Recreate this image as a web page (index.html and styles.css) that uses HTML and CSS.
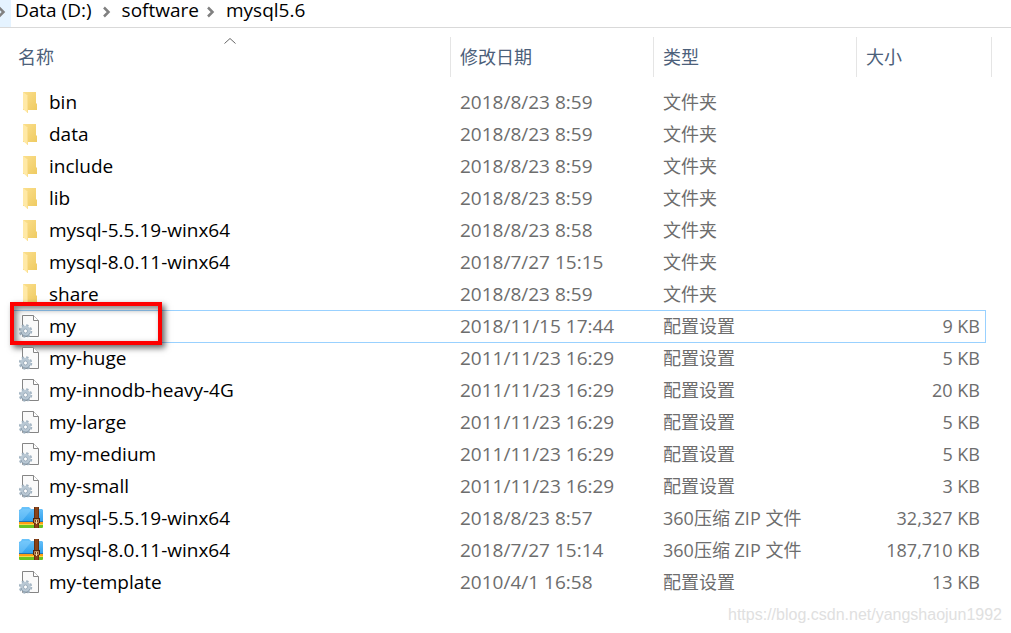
FILE: index.html
```
<!DOCTYPE html>
<html lang="zh-CN">

<head>
    <meta charset="UTF-8">
    <title>mysql5.6</title>
    <link rel="stylesheet" href="styles.css">
</head>

<body>
    <svg class="symbols" aria-hidden="true">
        <linearGradient id="folderBack" x1="0" y1="0" x2="1" y2="1">
            <stop offset="0" stop-color="#fbdf8d" />
            <stop offset="1" stop-color="#efcb62" />
        </linearGradient>
        <linearGradient id="zipBlue" x1="0" y1="0" x2="0" y2="1">
            <stop offset="0" stop-color="#6cc4fb" />
            <stop offset="1" stop-color="#2b9ceb" />
        </linearGradient>
        <symbol id="folder" viewBox="0 0 24 24">
            <path d="M4 2h13v11l1 1v6H4z" fill="url(#folderBack)" />
            <path d="M4 2l4 3 1 1v17l-1-.5L4 19z" fill="#ffe9a6" />
            <path d="M8 5l1 1v17l-1-.5z" fill="#fbdf90" />
        </symbol>
        <symbol id="ini" viewBox="0 0 24 24">
            <path d="M3.500 1.500h11l5 5v16h-16z" fill="#fafafa" stroke="#858585" />
            <path d="M14.500 1.500v5h5" fill="#fff" stroke="#858585" />
            <circle cx="6.500" cy="17" r="5.500" fill="none" stroke="#a3b4c2" stroke-width="2.500" stroke-dasharray="2.300 2.020" />
            <circle cx="6.500" cy="17" r="3.500" fill="#fff" stroke="#b9c8d4" stroke-width="3.500" />
            <path d="M2 18a5 5 0 0 0 6 4M11 19a5 5 0 0 1-3 3" fill="none" stroke="#8c9eae" />
            <circle cx="6.500" cy="17" r="2" fill="#fff" stroke="#8c9eae" stroke-width=".8" />
        </symbol>
        <symbol id="zip" viewBox="0 0 24 24">
            <path d="M0 4l2-1 1-2h7l2 2h11l1 1v13H0z" fill="url(#zipBlue)" />
            <path d="M4 3h9L3 15H0V5z" fill="#8fd5ff" opacity=".4" />
            <path d="M0 15h24v4H0z" fill="#ff9e12" />
            <path d="M0 15h24v1H0z" fill="#2272ae" />
            <path d="M0 18h24v1H0z" fill="#f7d84a" />
            <path d="M0 19h24v2q0 1-1 1H1q-1 0-1-1z" fill="#69c423" />
            <path d="M15 1h5v21h-5z" fill="#8a4319" />
            <path d="M15 1h1v21h-1zM19 1h1v21h-1z" fill="#66300f" />
            <path d="M14 12h7v5h-7z" fill="#4e2410" />
            <path d="M15.500 13.500h4v3h-4z" fill="#7a3c18" stroke="#d5a970" stroke-width=".8" />
            <path d="M17 14h1v4h-1z" fill="#f3dcae" />
        </symbol>
        <symbol id="chevron" viewBox="0 0 8 12">
            <path d="M1 1.500L5.500 6 1 10.500" fill="none" stroke="#808080" stroke-width="2.500" />
        </symbol>
    </svg>

    <nav class="address">
        <span class="address-start"><svg class="chevron"><use href="#chevron" /></svg></span>
        <a href="#">Data (D:)</a>
        <svg class="chevron"><use href="#chevron" /></svg>
        <a href="#">software</a>
        <svg class="chevron"><use href="#chevron" /></svg>
        <a href="#">mysql5.6</a>
    </nav>

    <main class="listing">
        <table class="files">
            <colgroup>
                <col>
                <col class="col-date">
                <col class="col-type">
                <col class="col-size">
                <col class="col-edge">
            </colgroup>
            <thead>
                <tr>
                    <th><div class="head">名称<svg class="sort" viewBox="0 0 12 6"><path d="M.5 5.500L6 .5l5.500 5" fill="none" stroke="#666" /></svg></div></th>
                    <th><div class="head">修改日期</div></th>
                    <th><div class="head">类型</div></th>
                    <th colspan="2"><div class="head">大小</div></th>
                </tr>
            </thead>
            <tbody>
                <tr><td><div class="name"><svg class="icon"><use href="#folder" /></svg>bin</div></td><td class="date">2018/8/23 8:59</td><td>文件夹</td><td class="size"></td></tr>
                <tr><td><div class="name"><svg class="icon"><use href="#folder" /></svg>data</div></td><td class="date">2018/8/23 8:59</td><td>文件夹</td><td class="size"></td></tr>
                <tr><td><div class="name"><svg class="icon"><use href="#folder" /></svg>include</div></td><td class="date">2018/8/23 8:59</td><td>文件夹</td><td class="size"></td></tr>
                <tr><td><div class="name"><svg class="icon"><use href="#folder" /></svg>lib</div></td><td class="date">2018/8/23 8:59</td><td>文件夹</td><td class="size"></td></tr>
                <tr><td><div class="name"><svg class="icon"><use href="#folder" /></svg>mysql-5.5.19-winx64</div></td><td class="date">2018/8/23 8:58</td><td>文件夹</td><td class="size"></td></tr>
                <tr><td><div class="name"><svg class="icon"><use href="#folder" /></svg>mysql-8.0.11-winx64</div></td><td class="date">2018/7/27 15:15</td><td>文件夹</td><td class="size"></td></tr>
                <tr><td><div class="name"><svg class="icon"><use href="#folder" /></svg>share</div></td><td class="date">2018/8/23 8:59</td><td>文件夹</td><td class="size"></td></tr>
                <tr class="selected"><td><div class="name"><svg class="icon"><use href="#ini" /></svg>my<span class="marker"></span></div></td><td class="date">2018/11/15 17:44</td><td>配置设置</td><td class="size">9 KB</td></tr>
                <tr><td><div class="name"><svg class="icon"><use href="#ini" /></svg>my-huge</div></td><td class="date">2011/11/23 16:29</td><td>配置设置</td><td class="size">5 KB</td></tr>
                <tr><td><div class="name"><svg class="icon"><use href="#ini" /></svg>my-innodb-heavy-4G</div></td><td class="date">2011/11/23 16:29</td><td>配置设置</td><td class="size">20 KB</td></tr>
                <tr><td><div class="name"><svg class="icon"><use href="#ini" /></svg>my-large</div></td><td class="date">2011/11/23 16:29</td><td>配置设置</td><td class="size">5 KB</td></tr>
                <tr><td><div class="name"><svg class="icon"><use href="#ini" /></svg>my-medium</div></td><td class="date">2011/11/23 16:29</td><td>配置设置</td><td class="size">5 KB</td></tr>
                <tr><td><div class="name"><svg class="icon"><use href="#ini" /></svg>my-small</div></td><td class="date">2011/11/23 16:29</td><td>配置设置</td><td class="size">3 KB</td></tr>
                <tr><td><div class="name"><svg class="icon"><use href="#zip" /></svg>mysql-5.5.19-winx64</div></td><td class="date">2018/8/23 8:57</td><td>360压缩 ZIP 文件</td><td class="size">32,327 KB</td></tr>
                <tr><td><div class="name"><svg class="icon"><use href="#zip" /></svg>mysql-8.0.11-winx64</div></td><td class="date">2018/7/27 15:14</td><td>360压缩 ZIP 文件</td><td class="size">187,710 KB</td></tr>
                <tr><td><div class="name"><svg class="icon"><use href="#ini" /></svg>my-template</div></td><td class="date">2010/4/1 16:58</td><td>配置设置</td><td class="size">13 KB</td></tr>
            </tbody>
        </table>
    </main>

    <footer class="watermark">https://blog.csdn.net/yangshaojun1992</footer>
</body>

</html>
```
FILE: styles.css
```
body {
    margin: 0;
    background-color: white;
    color: black;
    font-family: "Open Sans", "Noto Sans CJK SC", sans-serif;
    font-size: 19px;
}

.symbols {
    position: absolute;
    width: 0;
    height: 0;
}

.address {
    display: flex;
    align-items: flex-start;
    height: 27px;
    border-bottom: 1px solid #d9d9d9;
    line-height: 21px;
}

.address a {
    color: black;
    text-decoration: none;
    margin: 0 11px;
}

.address-start + a {
    margin-left: 4px;
}

.address a + .chevron + a {
    margin-right: 8px;
}

.address-start {
    display: flex;
    width: 11px;
    height: 27px;
    background-color: #e5f3ff;
}

.chevron {
    width: 8px;
    height: 12px;
    margin-top: 6px;
}

.address-start .chevron {
    margin-left: -2px;
}

.listing {
    padding: 9px 19px 0 10px;
}

.files {
    width: 100%;
    table-layout: fixed;
    border-collapse: separate;
    border-spacing: 0;
}

.col-date,
.col-type {
    width: 203px;
}

.col-size {
    width: 129px;
}

.col-edge {
    width: 6px;
}

th {
    padding: 0 0 9px;
    font-size: 18px;
    font-weight: normal;
    text-align: left;
    color: #4c607a;
}

.head {
    position: relative;
    height: 40px;
    line-height: 40px;
    padding-left: 9px;
    border-right: 1px solid #e5e5e5;
}

th:first-child .head {
    padding-left: 8px;
}

.sort {
    position: absolute;
    top: 1px;
    left: 50%;
    width: 12px;
    height: 6px;
    margin-left: -6px;
}

td {
    height: 32px;
    padding: 0 0 0 9px;
    line-height: 30px;
    font-size: 18px;
    color: #6d6d6d;
    white-space: nowrap;
}

.name {
    position: relative;
    display: flex;
    align-items: center;
    font-size: 19px;
    color: black;
}

.icon {
    width: 24px;
    height: 24px;
    margin-right: 6px;
}

td.date {
    font-size: 19px;
}

td.size {
    padding-right: 6px;
    text-align: right;
}

/* the row below carries the bottom line of the selection */
.selected td,
.selected + tr td {
    height: 30px;
    padding-bottom: 1px;
    border-top: 1px solid #99d1ff;
}

.selected .size {
    padding-right: 5px;
    border-right: 1px solid #99d1ff;
}

.marker {
    position: absolute;
    top: -9px;
    left: -9px;
    width: 144px;
    height: 35px;
    border: 4px solid #fe0000;
    box-shadow: 3px 3px 6px rgba(0, 0, 0, .6), inset 3px 3px 6px rgba(0, 0, 0, .5);
}

.watermark {
    padding: 8px 9px 0 0;
    text-align: right;
    font-family: "Liberation Sans", sans-serif;
    font-size: 16px;
    line-height: 18px;
    color: #e0e0e0;
}
```
